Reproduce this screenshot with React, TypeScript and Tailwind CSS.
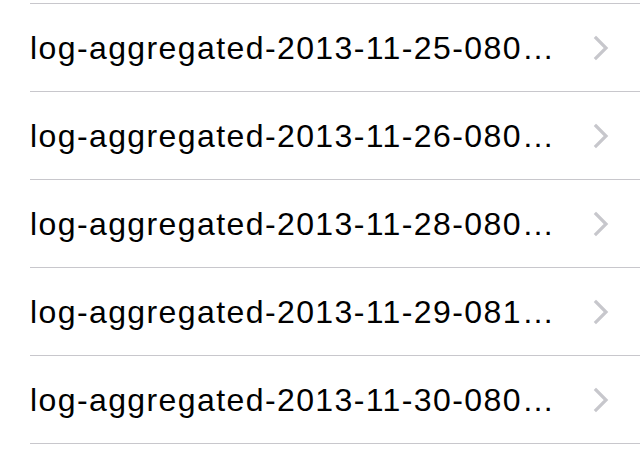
const files = [
  "log-aggregated-2013-11-25-080…",
  "log-aggregated-2013-11-26-080…",
  "log-aggregated-2013-11-28-080…",
  "log-aggregated-2013-11-29-081…",
  "log-aggregated-2013-11-30-080…",
];

function Chevron() {
  return (
    <svg width="16" height="26" viewBox="0 0 16 26" fill="none">
      <path d="M3 3 L13 13 L3 23" stroke="#c7c7cc" strokeWidth="3.2" strokeLinecap="square" strokeLinejoin="miter" />
    </svg>
  );
}

export default function App() {
  return (
    <div className="w-[640px] h-[455px] overflow-hidden bg-white pt-[3px] font-['Liberation_Sans',Arial,sans-serif]">
      <div className="ml-[30px] border-t border-[#c8c7cc]" />
      {files.map((name) => (
        <div key={name} className="ml-[30px] border-b border-[#c8c7cc]">
          <div className="flex h-[87px] items-center pr-[31px]">
            <span className="flex-1 whitespace-nowrap text-[32px] tracking-[1.4px] text-black leading-none">{name}</span>
            <Chevron />
          </div>
        </div>
      ))}
    </div>
  );
}
